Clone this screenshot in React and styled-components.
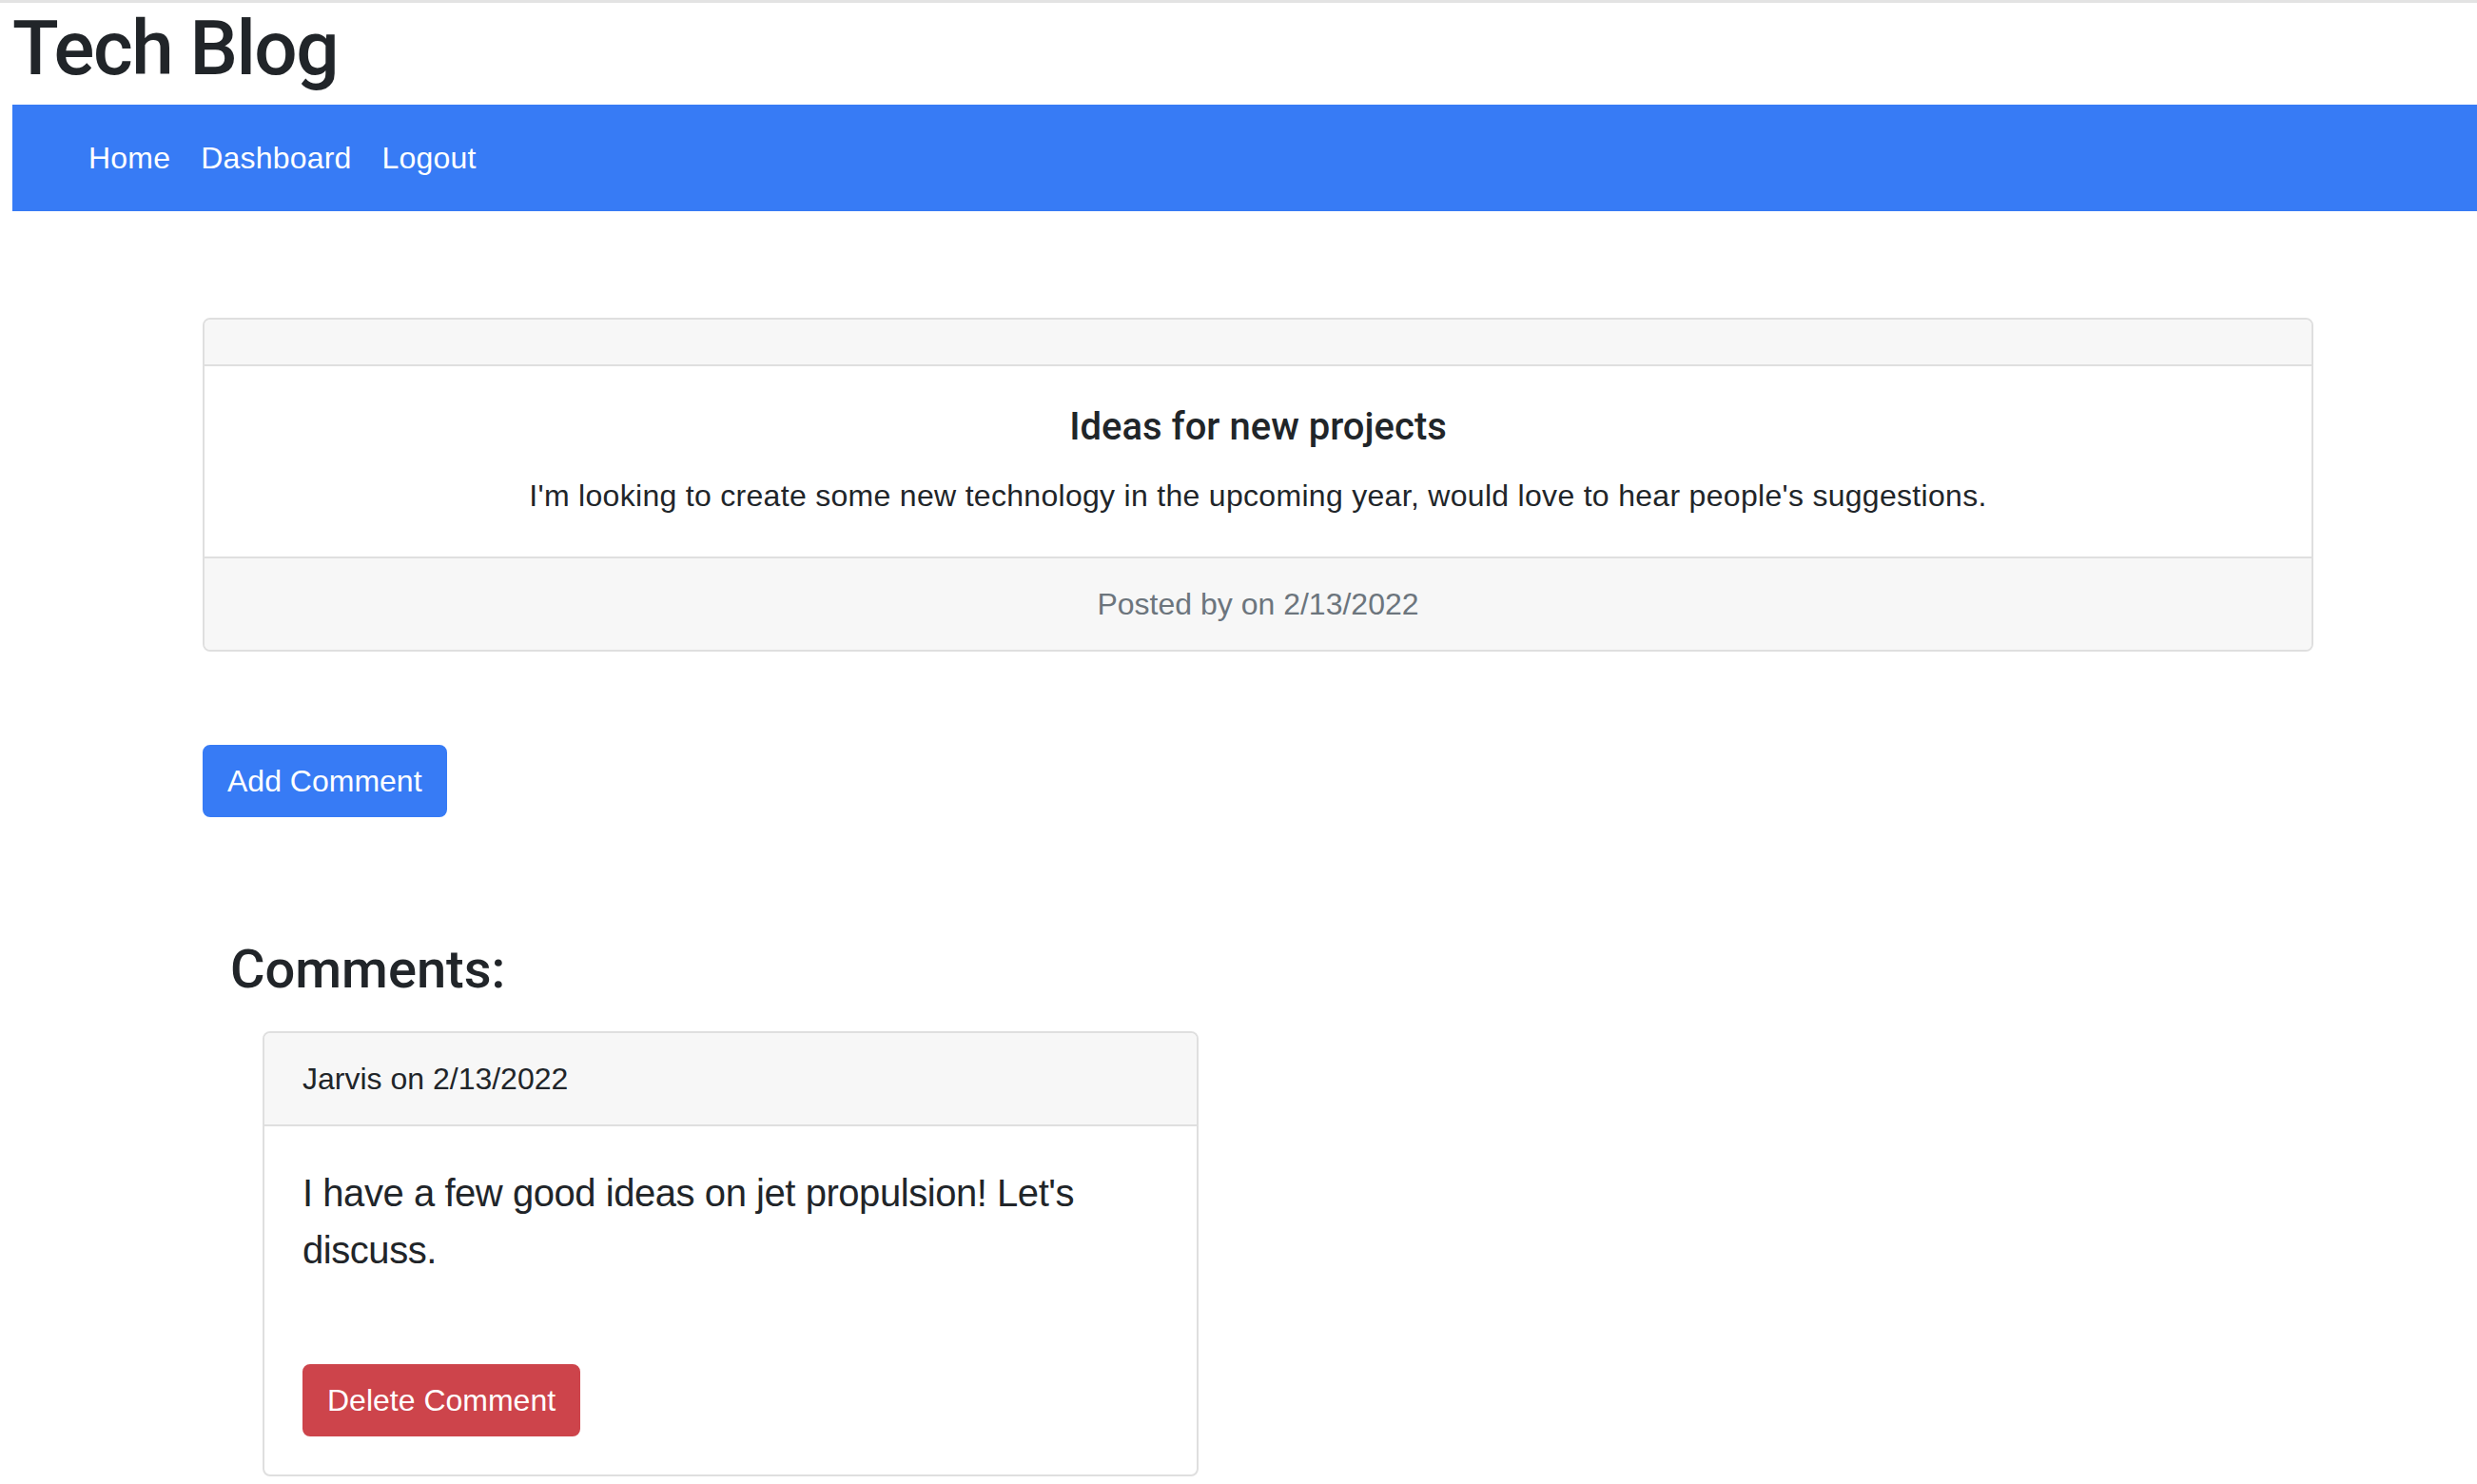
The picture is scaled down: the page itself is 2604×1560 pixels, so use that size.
import React from "react";
import styled, { createGlobalStyle } from "styled-components";

// page is drawn at 2x of a bootstrap 4 layout, so every value is doubled
const GlobalStyle = createGlobalStyle`
  html, body {
    margin: 0;
    padding: 0;
    background: #fff;
  }
  body {
    font-family: "Liberation Sans", Arial, Helvetica, sans-serif;
    font-size: 32px;
    line-height: 1.5;
    color: #212529;
    border-top: 3px solid #e3e3e3;
  }
`;

const headingFont = `"Roboto", "Liberation Sans", Arial, sans-serif`;

const Page = styled.div`
  padding-left: 13px;
  min-height: 1557px;
`;

const Title = styled.h1`
  margin: 0 0 11px;
  font-family: ${headingFont};
  font-size: 80px;
  font-weight: 500;
  line-height: 96px;
  letter-spacing: -1.5px;
`;

const Navbar = styled.nav`
  display: flex;
  align-items: center;
  height: 112px;
  padding-left: 64px;
  background: #377bf5;
`;

const NavLink = styled.a`
  padding: 0 16px;
  color: #fff;
  font-size: 32px;
  line-height: 48px;
  text-decoration: none;
  letter-spacing: 0.2px;
`;

const Main = styled.main`
  width: 2219px;
  margin-left: 200px;
  padding-top: 112px;
`;

const Card = styled.div`
  display: flex;
  flex-direction: column;
  border: 2px solid #dfdfdf;
  border-radius: 8px;
  background: #fff;
  overflow: hidden;
  text-align: ${({ center }) => (center ? "center" : "left")};
  width: ${({ width }) => (width ? `${width}px` : "auto")};
  margin-left: ${({ indent }) => (indent ? `${indent}px` : "0")};
`;

const CardHeader = styled.div`
  min-height: 47px;
  padding: ${({ empty }) => (empty ? "0 40px" : "24px 40px")};
  background: #f7f7f7;
  border-bottom: 2px solid #dfdfdf;
  line-height: 48px;
`;

const CardBody = styled.div`
  padding: 40px;
`;

const CardTitle = styled.h5`
  margin: 0 0 24px;
  font-family: ${headingFont};
  font-size: 40px;
  font-weight: 500;
  line-height: 48px;
`;

const CardText = styled.p`
  margin: 0;
  line-height: 48px;
  letter-spacing: 0.3px;
`;

const CardFooter = styled.div`
  padding: 24px 40px;
  background: #f7f7f7;
  border-top: 2px solid #dfdfdf;
  color: #6c757d;
  line-height: 48px;
`;

const Button = styled.button`
  display: inline-block;
  padding: 12px 24px;
  border: 2px solid ${({ danger }) => (danger ? "#cd444b" : "#377bf5")};
  border-radius: 8px;
  background: ${({ danger }) => (danger ? "#cd444b" : "#377bf5")};
  color: #fff;
  font-family: inherit;
  font-size: 32px;
  line-height: 48px;
  cursor: pointer;
`;

const AddRow = styled.div`
  margin-top: 98px;
`;

const CommentsHeading = styled.h2`
  margin: 127px 0 31px 29px;
  font-family: ${headingFont};
  font-size: 56px;
  font-weight: 500;
  line-height: 67px;
`;

const CommentText = styled.p`
  margin: 0 0 90px;
  font-size: 40px;
  line-height: 60px;
  letter-spacing: -0.45px;
`;

export default function App() {
  return (
    <>
      <GlobalStyle />
      <Page>
        <Title>Tech Blog</Title>
        <Navbar>
          <NavLink href="#">Home</NavLink>
          <NavLink href="#">Dashboard</NavLink>
          <NavLink href="#">Logout</NavLink>
        </Navbar>

        <Main>
          <Card center>
            <CardHeader empty />
            <CardBody>
              <CardTitle>Ideas for new projects</CardTitle>
              <CardText>
                I'm looking to create some new technology in the upcoming year, would love to hear people's suggestions.
              </CardText>
            </CardBody>
            <CardFooter>Posted by on 2/13/2022</CardFooter>
          </Card>

          <AddRow>
            <Button>Add Comment</Button>
          </AddRow>

          <CommentsHeading>Comments:</CommentsHeading>
          <Card width={980} indent={63}>
            <CardHeader>Jarvis on 2/13/2022</CardHeader>
            <CardBody>
              <CommentText>I have a few good ideas on jet propulsion! Let's discuss.</CommentText>
              <Button danger>Delete Comment</Button>
            </CardBody>
          </Card>
        </Main>
      </Page>
    </>
  );
}
